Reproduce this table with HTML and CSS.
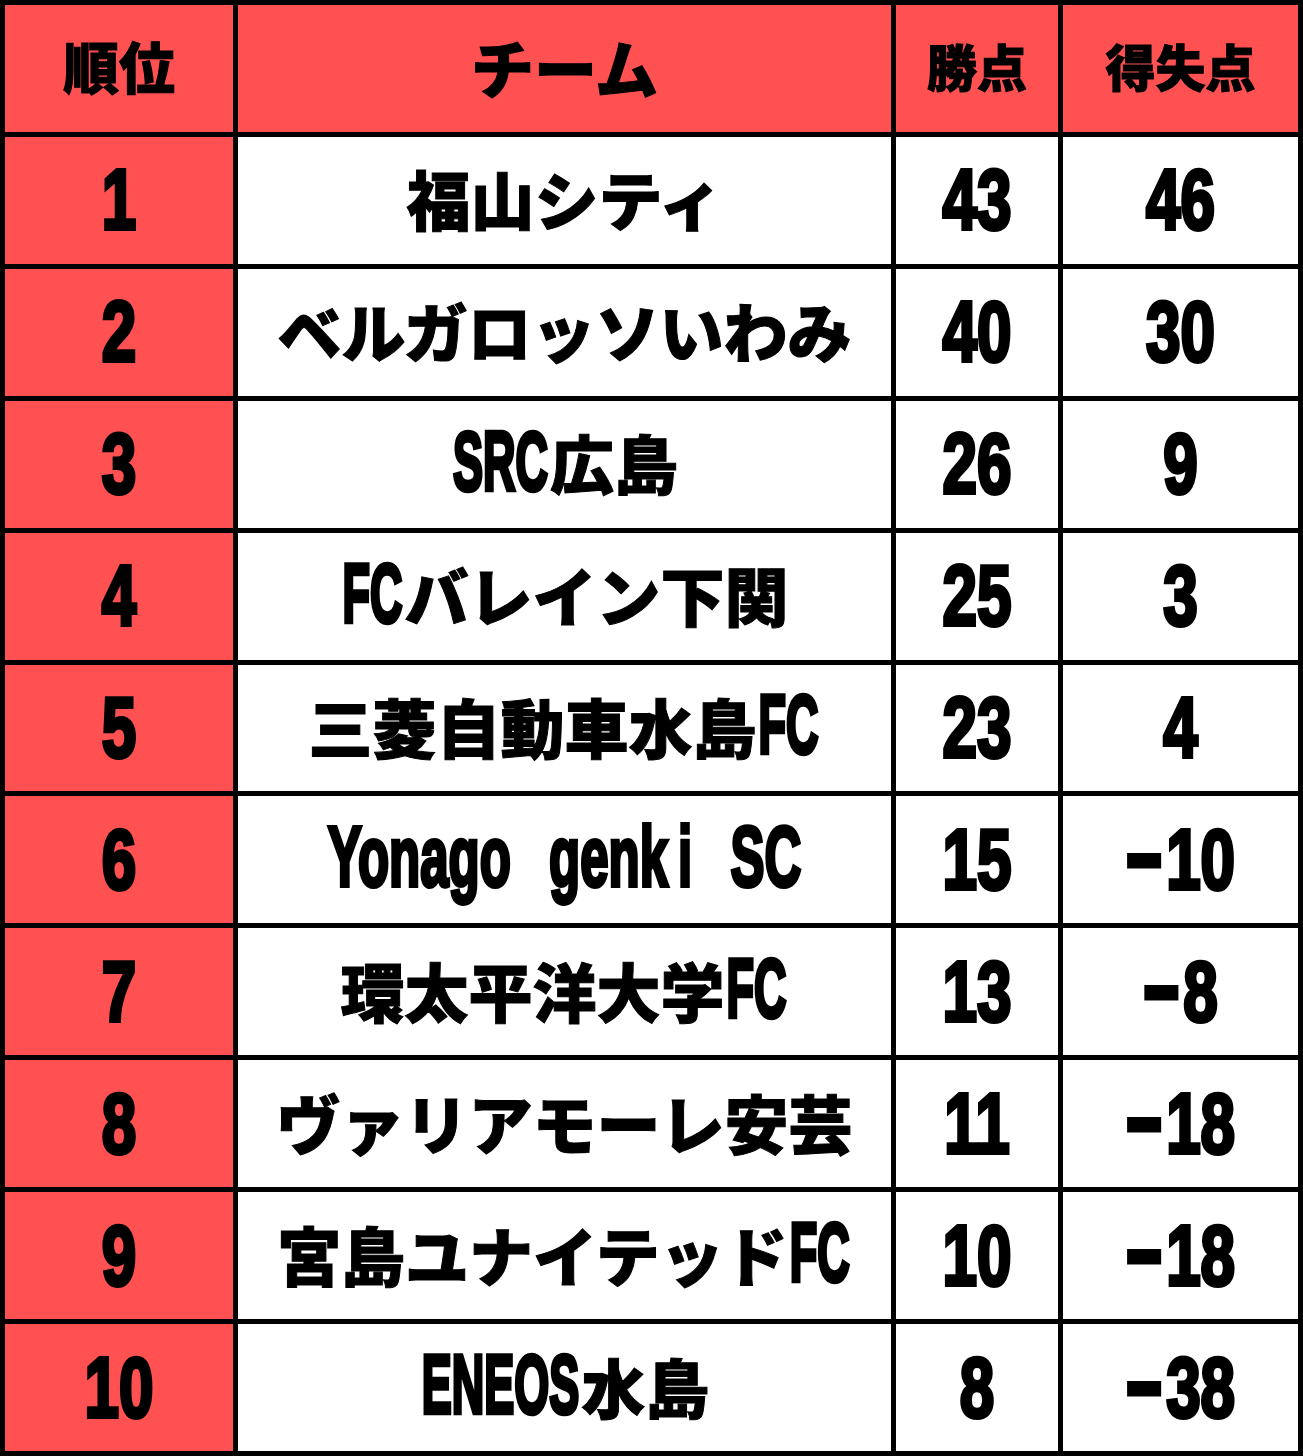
FILE: index.html
```html
<!DOCTYPE html>
<html lang="ja">
<head>
<meta charset="utf-8">
<title>順位表</title>
<link rel="stylesheet" href="styles.css">
</head>
<body>
<div class="table">
  <div class="cell head h-rank">順位</div>
  <div class="cell head h-team">チーム</div>
  <div class="cell head h-pts">勝点</div>
  <div class="cell head h-gd">得失点</div>

  <div class="cell rank"><span class="num">1</span></div>
  <div class="cell name">福山シティ</div>
  <div class="cell val"><span class="num">43</span></div>
  <div class="cell val"><span class="num">46</span></div>

  <div class="cell rank"><span class="num">2</span></div>
  <div class="cell name">ベルガロッソいわみ</div>
  <div class="cell val"><span class="num">40</span></div>
  <div class="cell val"><span class="num">30</span></div>

  <div class="cell rank"><span class="num">3</span></div>
  <div class="cell name"><span class="lat">SRC</span>広島</div>
  <div class="cell val"><span class="num">26</span></div>
  <div class="cell val"><span class="num">9</span></div>

  <div class="cell rank"><span class="num">4</span></div>
  <div class="cell name"><span class="lat">FC</span>バレイン下関</div>
  <div class="cell val"><span class="num">25</span></div>
  <div class="cell val"><span class="num">3</span></div>

  <div class="cell rank"><span class="num">5</span></div>
  <div class="cell name">三菱自動車水島<span class="lat">FC</span></div>
  <div class="cell val"><span class="num">23</span></div>
  <div class="cell val"><span class="num">4</span></div>

  <div class="cell rank"><span class="num">6</span></div>
  <div class="cell name"><span class="lat yonago">Yonago genk<span class="wide-i">i</span> SC</span></div>
  <div class="cell val"><span class="num">15</span></div>
  <div class="cell val"><span class="num"><span class="minus">−</span>10</span></div>

  <div class="cell rank"><span class="num">7</span></div>
  <div class="cell name">環太平洋大学<span class="lat">FC</span></div>
  <div class="cell val"><span class="num">13</span></div>
  <div class="cell val"><span class="num"><span class="minus">−</span>8</span></div>

  <div class="cell rank"><span class="num">8</span></div>
  <div class="cell name">ヴァリアモーレ安芸</div>
  <div class="cell val"><span class="num">11</span></div>
  <div class="cell val"><span class="num"><span class="minus">−</span>18</span></div>

  <div class="cell rank"><span class="num">9</span></div>
  <div class="cell name">宮島ユナイテッド<span class="lat">FC</span></div>
  <div class="cell val"><span class="num">10</span></div>
  <div class="cell val"><span class="num"><span class="minus">−</span>18</span></div>

  <div class="cell rank"><span class="num">10</span></div>
  <div class="cell name"><span class="lat">ENEOS</span>水島</div>
  <div class="cell val"><span class="num">8</span></div>
  <div class="cell val"><span class="num"><span class="minus">−</span>38</span></div>
</div>
</body>
</html>
```

FILE: styles.css
```css
html, body {
  margin: 0;
  padding: 0;
  background: #ffffff;
}

.table {
  display: grid;
  grid-template-columns: 228px 653px 162px 235px;
  grid-template-rows: repeat(11, 1fr);
  gap: 5px;
  padding: 5px;
  width: 1303px;
  height: 1456px;
  box-sizing: border-box;
  background: #000000;
}

.cell {
  display: flex;
  align-items: center;
  justify-content: center;
  background: #ffffff;
  color: #000000;
  white-space: nowrap;
  overflow: hidden;
  line-height: 1;
  font-family: "Noto Sans CJK JP", sans-serif;
  font-weight: 900;
}

.head,
.rank {
  background: #ff5151;
}

.head {
  padding-bottom: 6px;
  box-sizing: border-box;
  -webkit-text-stroke: 1px #000;
}

.h-rank { font-size: 56px; }
.h-team { font-size: 63px; }
.h-pts  { font-size: 50px; }
.h-gd   { font-size: 50px; }

/* condensed numerals: narrow font size, stretched vertically */
.num {
  display: inline-block;
  font-family: "Liberation Sans", Arial, sans-serif;
  font-weight: 700;
  font-size: 62px;
  transform: scaleY(1.36);
  -webkit-text-stroke: 3px #000;
}

.minus {
  display: inline-block;
  margin-right: 4px;
  transform: scaleY(1.15);
}

.name {
  font-size: 64px;
  padding-bottom: 6px;
  box-sizing: border-box;
  -webkit-text-stroke: 1px #000;
}

.lat {
  display: inline-block;
  font-family: "Liberation Sans", Arial, sans-serif;
  font-weight: 700;
  font-size: 45px;
  transform: scaleY(1.86);
  -webkit-text-stroke: 2.5px #000;
  margin: 0 2px;
}

.lat.yonago {
  font-size: 51px;
  transform: scaleY(1.66);
  word-spacing: 24px;
}

.wide-i {
  margin-left: 10px;
}
```
